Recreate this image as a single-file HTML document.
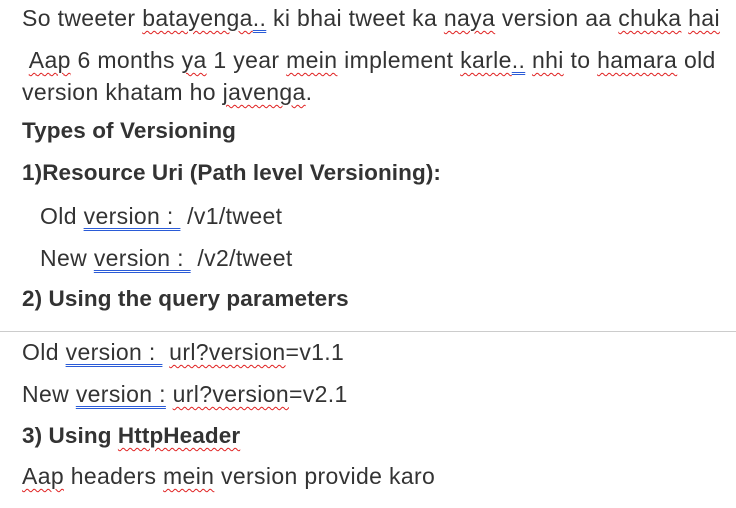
<!DOCTYPE html>
<html><head><meta charset="utf-8"><style>
body{margin:0;width:736px;height:508px;background:#fff;position:relative;overflow:hidden;font-family:"Liberation Sans",sans-serif;color:#333;font-size:23px;letter-spacing:0.35px;}
.l{position:absolute;left:22px;white-space:nowrap;line-height:24px;}
.b{font-weight:bold;font-size:22.5px;letter-spacing:0.1px;}
.w{text-decoration:underline wavy #e02020;text-decoration-thickness:1px;text-underline-offset:4px;}
.u{text-decoration:underline double #2a5bd7;text-decoration-thickness:1px;text-underline-offset:4px;}
.hr{position:absolute;left:0;top:331px;width:736px;height:1px;background:#ccc;}
</style></head><body>
<div class="l" style="top:6px">So tweeter <span class="w">batayenga</span><span class="u">..</span> ki bhai tweet ka <span class="w">naya</span> version aa <span class="w">chuka</span> <span class="w">hai</span></div>
<div class="l" style="top:48px">&nbsp;<span class="w">Aap</span> 6 months <span class="w">ya</span> 1 year <span class="w">mein</span> implement <span class="w">karle</span><span class="u">..</span> <span class="w">nhi</span> to <span class="w">hamara</span> old</div>
<div class="l" style="top:80px">version khatam ho <span class="w">javenga</span>.</div>
<div class="l b" style="top:119px">Types of Versioning</div>
<div class="l b" style="top:161px">1)Resource Uri (Path level Versioning):</div>
<div class="l" style="top:204px;left:40px">Old <span class="u">version :&nbsp;</span> /v1/tweet</div>
<div class="l" style="top:246px;left:40px">New <span class="u">version :&nbsp;</span> /v2/tweet</div>
<div class="l b" style="top:287px">2) Using the query parameters</div>
<div class="hr"></div>
<div class="l" style="top:340px">Old <span class="u">version :&nbsp;</span>&nbsp;<span class="w">url?version</span>=v1.1</div>
<div class="l" style="top:382px">New <span class="u">version :</span> <span class="w">url?version</span>=v2.1</div>
<div class="l b" style="top:424px">3) Using <span class="w">HttpHeader</span></div>
<div class="l" style="top:464px"><span class="w">Aap</span> headers <span class="w">mein</span> version provide karo</div>
</body></html>
